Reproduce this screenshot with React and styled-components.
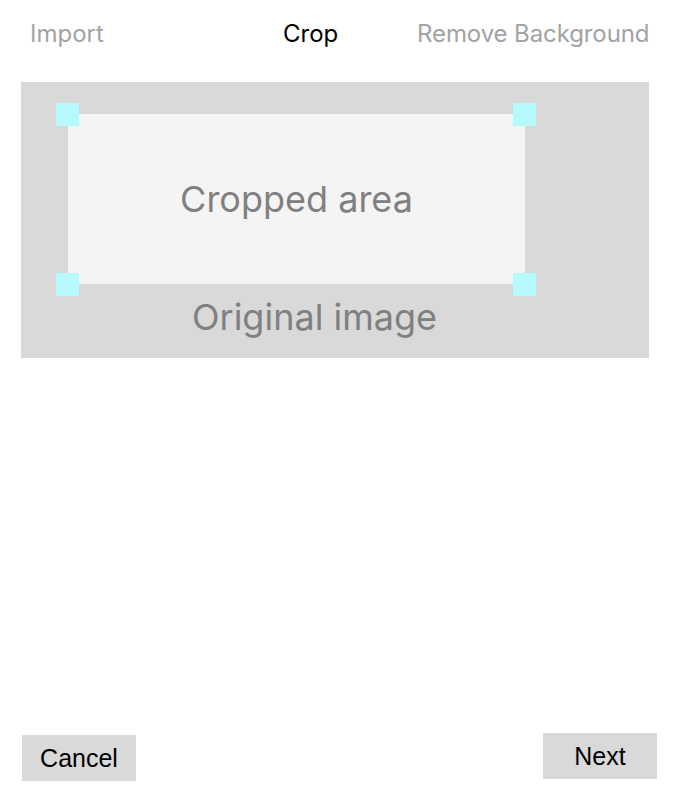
import React from "react";
import styled, { createGlobalStyle } from "styled-components";

const Global = createGlobalStyle`
  html, body { margin: 0; padding: 0; background: #ffffff; }
  body { font-family: Inter, "Noto Sans", sans-serif; }
  * { box-sizing: border-box; }
`;

const Page = styled.div`
  width: 673px;
  min-height: 801px;
  display: flex;
  flex-direction: column;
`;

const TabBar = styled.nav`
  display: grid;
  grid-template-columns: 253px 134px auto;
  justify-content: start;
  align-items: center;
  padding: 19px 0 0 30px;
`;

const Tab = styled.div`
  font-family: Inter, sans-serif;
  font-size: 24px;
  line-height: 30px;
  letter-spacing: ${(p) => p.$tight ? "-0.1px" : "0"};
  color: ${(p) => (p.$active ? "#000000" : "#a3a3a3")};
  white-space: nowrap;
`;

const Canvas = styled.div`
  margin: 33px 0 0 21px;
  width: 628px;
  height: 276px;
  background: #d9d9d9;
  padding: 32px 0 0 47px;
  display: flex;
  flex-direction: column;
`;

const CropArea = styled.div`
  position: relative;
  width: 457px;
  height: 170px;
  background: #f4f4f4;
  display: flex;
  align-items: center;
  justify-content: center;
`;

const Label = styled.span`
  font-family: Inter, sans-serif;
  font-size: 36px;
  line-height: 44px;
  color: #808080;
  white-space: nowrap;
`;

const Caption = styled(Label)`
  display: block;
  width: 493px;
  text-align: center;
  margin-top: 11px;
`;

const Handle = styled.div`
  position: absolute;
  width: 23px;
  height: 23px;
  background: #b5fafc;
  ${(p) => (p.$top ? "top: -11px;" : "bottom: -12px;")}
  ${(p) => (p.$left ? "left: -12px;" : "right: -11px;")}
`;

const Footer = styled.div`
  margin-top: auto;
  display: flex;
  justify-content: space-between;
  align-items: flex-end;
  padding: 0 16px 20px 22px;
`;

const Button = styled.button`
  width: 114px;
  height: 46px;
  border: none;
  background: #d9d9d9;
  font-family: "Liberation Sans", Arial, sans-serif;
  font-size: 25px;
  color: #000000;
  padding: 0;
  margin-bottom: ${(p) => (p.$lift ? "2px" : "0")};
  cursor: pointer;
`;

export default function App() {
  return (
    <>
      <Global />
      <Page>
        <TabBar>
          <Tab>Import</Tab>
          <Tab $active>Crop</Tab>
          <Tab $tight>Remove Background</Tab>
        </TabBar>
        <Canvas>
          <CropArea>
            <Label>Cropped area</Label>
            <Handle $top $left />
            <Handle $top />
            <Handle $left />
            <Handle />
          </CropArea>
          <Caption>Original image</Caption>
        </Canvas>
        <Footer>
          <Button>Cancel</Button>
          <Button $lift>Next</Button>
        </Footer>
      </Page>
    </>
  );
}
